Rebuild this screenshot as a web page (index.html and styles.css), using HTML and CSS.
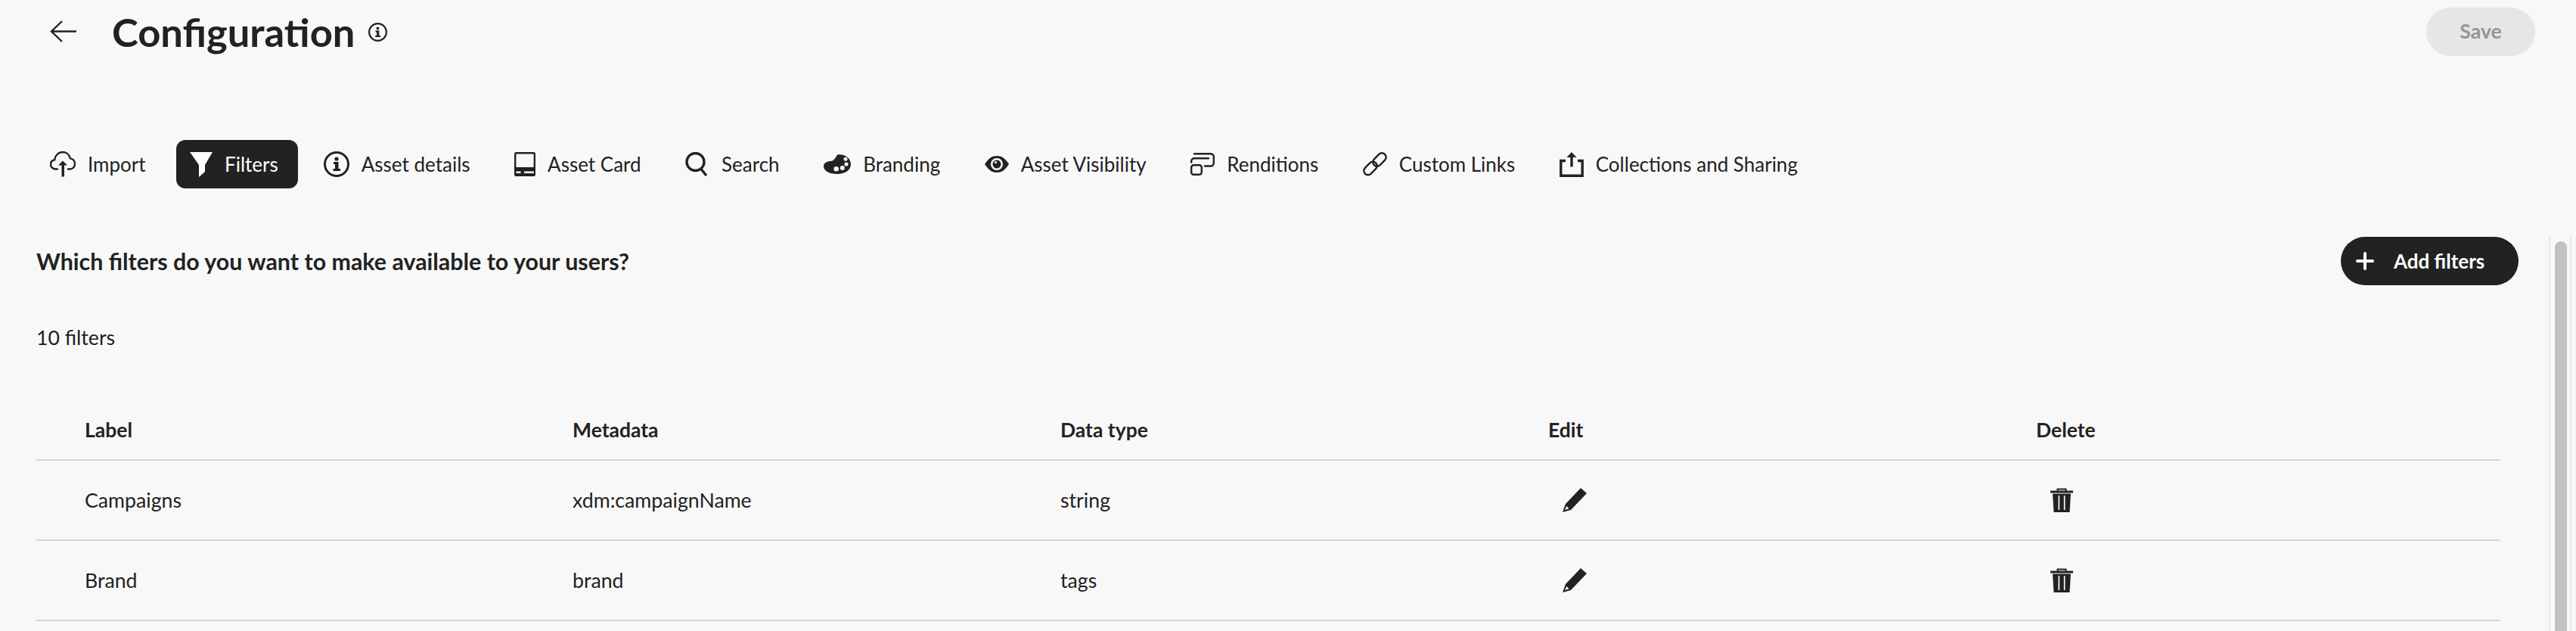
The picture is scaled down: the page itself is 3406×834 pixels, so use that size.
FILE: index.html
```html
<!DOCTYPE html>
<html>
  <head>
    <meta charset="utf-8">
    <title>Configuration</title>
    <link rel="stylesheet" href="styles.css">
  </head>
  <body>
    <div class="page">
      <header class="titlebar">
        <svg class="back-icon" viewBox="0 0 36 30"><path d="M35 14.500H2M16 1L2 14.500 16 28"/></svg>
        <h1 class="title">Configuration</h1>
        <svg class="title-info" viewBox="0 0 34 34"><circle class="ring" cx="17" cy="17" r="15.500"/><circle cx="17" cy="10" r="2.600"/><path d="M13 14h6.500v9H22v3h-9.500v-3H15v-6h-2z"/></svg>
        <button class="save-button">Save</button>
      </header>

      <nav class="tabs">
        <a class="tab">
          <svg width="34" height="34" viewBox="0 0 34 34"><path class="line" d="M10 23.500H7.500C3.800 23.500 1 20.700 1 17.200 1 14 3.200 11.800 6.300 11.300 6.800 5.500 11 1 16.800 1 22 1 25.900 4.600 27 9.400 30.600 10 33 13 33 16.500 33 20.500 30.200 23.500 26.500 23.500H24"/><path d="M17 12.500L23 18.500H19V33.500H15.500V18.500H11z"/></svg>
          <span>Import</span>
        </a>
        <a class="tab active">
          <svg width="30" height="33" viewBox="0 0 30 33"><path d="M0 0H30L20 17V26L12 33V17z"/></svg>
          <span>Filters</span>
        </a>
        <a class="tab">
          <svg width="34" height="34" viewBox="0 0 34 34"><circle class="ring" cx="17" cy="17" r="15.500"/><circle cx="17" cy="10" r="2.600"/><path d="M13 14h6.500v9H22v3h-9.500v-3H15v-6h-2z"/></svg>
          <span>Asset details</span>
        </a>
        <a class="tab">
          <svg width="28" height="32" viewBox="0 0 28 32"><rect class="line" x="1.200" y="1.200" width="25.600" height="29.600" rx="1.500"/><path d="M1 20H27V32H1z"/><path class="cut" d="M2.500 25.500H8.500V28H2.500zM13 25.500H26V28H13z"/></svg>
          <span>Asset Card</span>
        </a>
        <a class="tab">
          <svg width="32" height="32" viewBox="0 0 32 32"><circle class="heavy" cx="13.500" cy="13" r="11.500"/><path class="heavy" d="M21 22.500L28 31"/></svg>
          <span>Search</span>
        </a>
        <a class="tab">
          <svg width="36" height="26" viewBox="0 0 36 26"><path d="M18 0.500C28 -1 36 5 36 13 36 21 28 26 18 26 8 26 0 22 0 16 0 11 5 9 9 9 13 9 15 6 18 0.500z"/><circle class="cut" cx="16.700" cy="19.300" r="3.300"/><circle class="cut" cx="24.800" cy="18" r="3"/><circle class="cut" cx="30" cy="13" r="2.600"/><circle class="cut" cx="29" cy="6.300" r="2.500"/></svg>
          <span>Branding</span>
        </a>
        <a class="tab">
          <svg width="32" height="22" viewBox="0 0 32 22"><path d="M0 11C5 3 10 0 16 0 22 0 27 3 32 11 27 19 22 22 16 22 10 22 5 19 0 11z"/><circle class="cut" cx="16" cy="11" r="8"/><circle cx="16" cy="11" r="5.500"/><circle class="cut" cx="14.500" cy="8.500" r="1.600"/></svg>
          <span>Asset Visibility</span>
        </a>
        <a class="tab">
          <svg width="32" height="30" viewBox="0 0 32 30"><rect class="line" x="1.200" y="16.200" width="13.600" height="12.600" rx="3"/><path class="line" d="M5 1.200H26.500A4 4 0 0 1 30.800 5V13.500A4 4 0 0 1 26.800 17.500H19"/><path class="line" d="M1.200 12.500V11A4 4 0 0 1 5.200 7.200H24"/></svg>
          <span>Renditions</span>
        </a>
        <a class="tab">
          <svg width="32" height="32" viewBox="0 0 32 32"><rect class="line" x="-10" y="-5.500" width="20" height="11" rx="5.500" transform="translate(10 21.500) rotate(-45)"/><rect class="line" x="-10" y="-5.500" width="20" height="11" rx="5.500" transform="translate(22 10) rotate(-45)"/></svg>
          <span>Custom Links</span>
        </a>
        <a class="tab">
          <svg width="32" height="33" viewBox="0 0 32 33"><path class="heavy" d="M8 11.500H1.800V31.200H30.200V11.500H24"/><path d="M16 0L22.500 7H17.700V19.500H14.300V7H9.500z"/></svg>
          <span>Collections and Sharing</span>
        </a>
      </nav>

      <section class="panel">
        <div class="panel-body">
          <div class="panel-head">
            <h2 class="question">Which filters do you want to make available to your users?</h2>
            <button class="add-button">
              <svg class="plus-icon" viewBox="0 0 24 24"><path d="M12 2V22M2 12H22"/></svg>
              <span>Add filters</span>
            </button>
          </div>
          <div class="count">10 filters</div>
          <div class="filter-table">
            <div class="row head-row">
              <div>Label</div>
              <div>Metadata</div>
              <div>Data type</div>
              <div>Edit</div>
              <div>Delete</div>
            </div>
            <div class="row">
              <div>Campaigns</div>
              <div>xdm:campaignName</div>
              <div>string</div>
              <div><svg class="pencil-icon" viewBox="0 0 32 32"><path d="M24 0L32 7 11 29 0 32 4 21z"/><path class="cut" d="M5.500 24L8.500 27.300 3 29z"/></svg></div>
              <div><svg class="trash-icon" viewBox="0 0 30 32"><path class="handle" d="M9.500 4V1.500H20.500V4"/><path d="M0 3.500H30V6.500H0zM3 7.500H27L25.500 32H4.500z"/><path class="cut" d="M10.500 10H12.200V29H10.500zM17.800 10H19.500V29H17.800z"/></svg></div>
            </div>
            <div class="row">
              <div>Brand</div>
              <div>brand</div>
              <div>tags</div>
              <div><svg class="pencil-icon" viewBox="0 0 32 32"><path d="M24 0L32 7 11 29 0 32 4 21z"/><path class="cut" d="M5.500 24L8.500 27.300 3 29z"/></svg></div>
              <div><svg class="trash-icon" viewBox="0 0 30 32"><path class="handle" d="M9.500 4V1.500H20.500V4"/><path d="M0 3.500H30V6.500H0zM3 7.500H27L25.500 32H4.500z"/><path class="cut" d="M10.500 10H12.200V29H10.500zM17.800 10H19.500V29H17.800z"/></svg></div>
            </div>
          </div>
        </div>
        <div class="scroll-track"><div class="scroll-thumb"></div></div>
      </section>
    </div>
  </body>
</html>
```

FILE: styles.css
```css
* {
  box-sizing: border-box;
}

html,
body {
  margin: 0;
  height: 100%;
  overflow: hidden;
}

body {
  background-color: #f8f8f8;
  color: #222222;
  font-family: "Lato", "Open Sans", sans-serif;
  font-size: 26.700px;
}

svg {
  display: block;
  flex: none;
  fill: currentColor;
}

svg .line {
  fill: none;
  stroke: currentColor;
  stroke-width: 2.400;
  stroke-linecap: round;
}

svg .heavy {
  fill: none;
  stroke: currentColor;
  stroke-width: 3.400;
}

svg .ring {
  fill: none;
  stroke: currentColor;
  stroke-width: 3;
}

svg .cut {
  fill: #f8f8f8;
}

.page {
  height: 834px;
  display: flex;
  flex-direction: column;
}

/* title row */
.titlebar {
  display: flex;
  align-items: center;
  height: 64px;
  margin-top: 10px;
  padding: 0 54px 0 66px;
}

.back-icon {
  width: 36px;
  height: 30px;
  fill: none;
  stroke: currentColor;
  stroke-width: 2.400;
}

.title {
  margin: 0 0 0 46px;
  font-size: 52.500px;
  font-weight: 700;
  line-height: 64px;
}

.title-info {
  width: 25px;
  height: 25px;
  margin: 0 0 0 18px;
}

.save-button {
  margin-left: auto;
  width: 144px;
  height: 64px;
  padding: 0 0 3px;
  border: none;
  border-radius: 32px;
  background-color: #e6e6e6;
  color: #959595;
  font-family: inherit;
  font-size: 26.700px;
  font-weight: 700;
}

/* tabs */
.tabs {
  display: flex;
  gap: 16px;
  margin-top: 111px;
  padding-left: 48px;
}

.tab {
  display: flex;
  align-items: center;
  gap: 16px;
  height: 64px;
  padding: 0 24.500px 0 18px;
  border-radius: 12px;
  font-size: 26px;
  white-space: nowrap;
}

.tab.active {
  padding-right: 26px;
  background-color: #222222;
  color: #ffffff;
}

/* filters panel */
.panel {
  display: flex;
  flex: 1;
  margin-top: 64px;
  min-height: 0;
}

.panel-body {
  flex: 1;
  padding: 0 40px 0 48px;
}

.panel-head {
  display: flex;
  align-items: center;
  justify-content: space-between;
  height: 64px;
}

.question {
  margin: 0;
  font-size: 30.400px;
  font-weight: 700;
}

.add-button {
  display: flex;
  align-items: center;
  gap: 26px;
  width: 235px;
  height: 64px;
  padding: 0 0 0 20px;
  border: none;
  border-radius: 32px;
  background-color: #222222;
  color: #ffffff;
  font-family: inherit;
  font-size: 26px;
  font-weight: 700;
}

.plus-icon {
  width: 24px;
  height: 24px;
  fill: none;
  stroke: currentColor;
  stroke-width: 4;
  stroke-linecap: round;
}

.count {
  margin-top: 50px;
  line-height: 38px;
}

.filter-table {
  margin: 64px 24px 0 0;
}

.row {
  display: grid;
  grid-template-columns: repeat(4, 645px) 1fr;
  align-items: center;
  height: 106px;
  padding-left: 64px;
  border-bottom: 2px solid #d3d3d3;
}

.head-row {
  height: 80px;
  font-size: 26.500px;
  font-weight: 700;
}

.pencil-icon {
  width: 32px;
  height: 32px;
  margin-left: 19px;
}

.trash-icon {
  width: 30px;
  height: 32px;
  margin-left: 19px;
}

.trash-icon .handle {
  fill: none;
  stroke: currentColor;
  stroke-width: 2;
}

/* scrollbar */
.scroll-track {
  width: 30px;
  margin-right: 6px;
  padding: 6px 4px 0 6px;
  border: solid #e8e8e8;
  border-width: 0 2px;
}

.scroll-thumb {
  width: 16px;
  height: 100%;
  border-radius: 8px 8px 0 0;
  background-color: #c1c1c1;
}
```
